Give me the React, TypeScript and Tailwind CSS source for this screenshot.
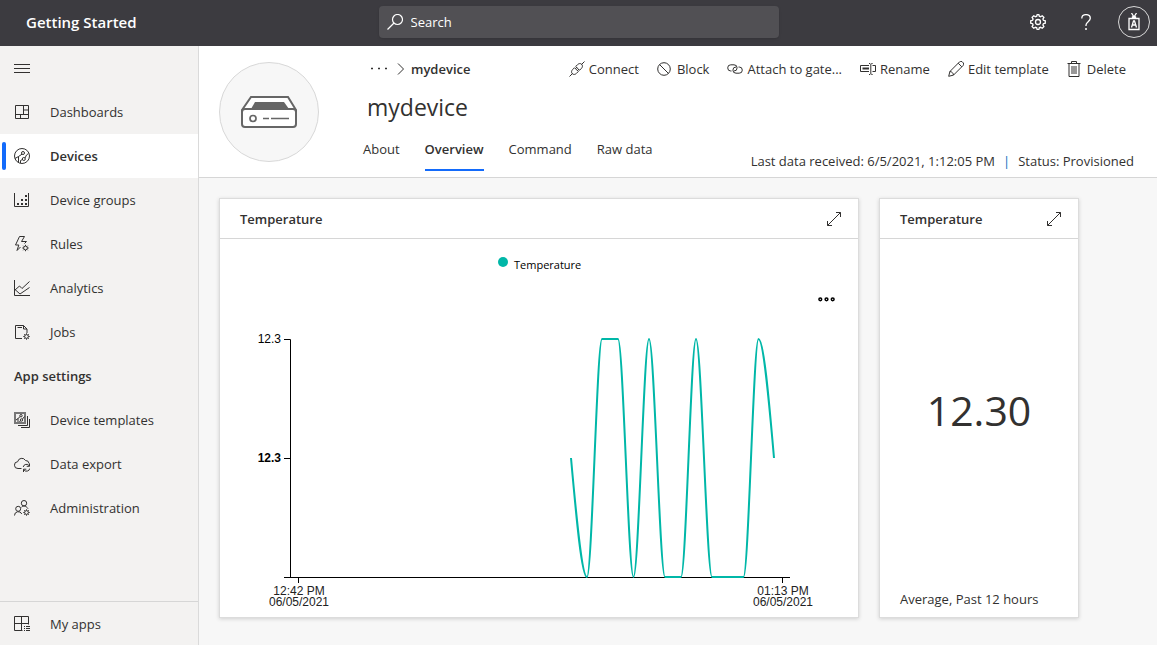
import type { ReactNode } from "react";

type IconProps = { children: ReactNode; className?: string; box?: string };

function Icon({ children, className = "size-4", box = "0 0 16 16" }: IconProps) {
  return (
    <svg
      viewBox={box}
      className={`shrink-0 ${className}`}
      fill="none"
      stroke="currentColor"
      strokeWidth="1"
      aria-hidden="true"
    >
      {children}
    </svg>
  );
}

const gearTeeth = (cx: number, cy: number, inner: number, outer: number) =>
  Array.from({ length: 8 }, (_, i) => {
    const a = (i * Math.PI) / 4;
    return `M${cx + inner * Math.cos(a)} ${cy + inner * Math.sin(a)}L${cx + outer * Math.cos(a)} ${cy + outer * Math.sin(a)}`;
  }).join("");

function SmallGear({ cx, cy }: { cx: number; cy: number }) {
  return (
    <>
      <circle cx={cx} cy={cy} r="1.9" />
      <path d={gearTeeth(cx, cy, 2, 3.2)} />
    </>
  );
}

const icons = {
  dashboards: (
    <Icon>
      <path d="M1.5 1.5h13v13h-13zM9.500 1.500v9M1.500 10.500h13M9.500 6h5M6.500 10.500v4" />
    </Icon>
  ),
  devices: (
    <Icon>
      <circle cx="8" cy="8" r="7.500" />
      <circle cx="9" cy="5" r="1.500" />
      <circle cx="9.800" cy="11" r="1.500" />
      <path d="M8 6.200L4.500 8.500v5.500M1 10.500l3.500-2M11 10l1.500-3 2-1.500M8.500 11.500l-2 1v2.500" />
    </Icon>
  ),
  groups: (
    <Icon>
      <path d="M.5 1v13.500h14V1" />
      <path strokeWidth="2" d="M3 12h2M7 12h2M11 12h2M7 8h2M11 8h2M11 4h2" />
    </Icon>
  ),
  rules: (
    <Icon>
      <path d="M6.500 11L3 14.500l1.800-5.500H1.500L5.500.5h5L7.500 5.500h5L10.500 7.500" />
      <SmallGear cx={11.5} cy={12} />
    </Icon>
  ),
  analytics: (
    <Icon>
      <path d="M.5 0v15.500H16M1 10l4.500-4 2.500 2.500L15.500 1.500M1 9.500l5 4.500 9.500-6.500" />
    </Icon>
  ),
  jobs: (
    <Icon>
      <path d="M8 14.500H1.500v-13h8l3.500 3.500v4M9.500 1.500V5H13M3.500 3.500h4.500" />
      <SmallGear cx={12.5} cy={12.5} />
    </Icon>
  ),
  templates: (
    <Icon>
      <path d="M1 1h10v10H1z" stroke="#777" strokeWidth="2" />
      <path d="M13.500 4v9.500H4M15.500 7v8.500H7" />
      <circle cx="7" cy="3.700" r="1.200" />
      <circle cx="7.500" cy="8" r="1.200" />
      <path d="M6 4.700L4 6.500V10M8.500 7l2-2.500M6.500 8.500L5.500 10M2 8l2-1.500" />
    </Icon>
  ),
  dataExport: (
    <Icon>
      <path d="M7.500 12.500H4a3.400 3.400 0 01-.3-6.800A4.200 4.200 0 0111.500 4.500a3.500 3.500 0 013.600 3" />
      <path d="M9.200 11a3.300 3.300 0 016-1.200M15.500 7.500v2.800h-2.800M15.800 12.500a3.300 3.300 0 01-6 1.200M9.500 16v-2.800h2.800" />
    </Icon>
  ),
  admin: (
    <Icon>
      <circle cx="10" cy="3.200" r="2.700" />
      <circle cx="4.200" cy="8.800" r="2.500" />
      <path d="M.5 15.500a3.800 3.800 0 017.300-1.500M7.500 7.200c1-1.300 4.500-2 6.500 1.500" />
      <SmallGear cx={12.5} cy={12.5} />
    </Icon>
  ),
  myApps: (
    <Icon>
      <path d="M8.500 14.500h-8V.5h14v8M.5 7.500h14M7.500.5v14M10 10.500h1M12 10.500h4M10 12.500h1M12 12.500h4M10 14.500h1M12 14.500h4" />
    </Icon>
  ),
  connect: (
    <Icon>
      <path d="M.5 15.500l3-3M12.500 3.500l3-3M3.300 12.700c-1.200-1.200-.8-3 .2-4l2-2 3.800 3.800-2 2c-1 1-2.800 1.400-4 .2zM6.700 5.500l3.800 3.800 2-2c1-1 1.400-2.800.2-4s-3-.8-4 .2zM6.500 7.700l1.700-1.700M8.500 9.700L10.200 8" />
    </Icon>
  ),
  block: (
    <Icon>
      <circle cx="7" cy="8" r="6.300" />
      <path d="M2.500 3.500l9 9" />
    </Icon>
  ),
  attach: (
    <Icon>
      <path d="M4.500 10H3.800a3.100 3.100 0 010-6.200H7A3.100 3.100 0 017 10M11.500 6h.7a3.100 3.100 0 010 6.200H9A3.100 3.100 0 019 6" />
    </Icon>
  ),
  rename: (
    <Icon>
      <path d="M9 4.500H.5v6H9M12.500 4.500h3v6h-3M9 2.500h1l.8.800.8-.8h1M9 13.500h1l.8-.8.8.8h1M10.800 3.300v9.400" />
      <path strokeWidth="2" d="M2.500 7.500H9" />
    </Icon>
  ),
  edit: (
    <Icon>
      <path d="M.7 15.300l1.200-4.800L11.500.9a1.900 1.900 0 012.800 0l.8.800a1.900 1.900 0 010 2.800L5.500 14.100zM1.900 10.500c1.800 0 3.600 1.800 3.600 3.600M10.200 2.200l3.600 3.600" />
    </Icon>
  ),
  trash: (
    <Icon>
      <path d="M.5 2.500h13M4.500 2.500V.5h5v2M2 2.500v13h10v-13M5 5v8M7 5v8M9 5v8" />
    </Icon>
  ),
  expand: (
    <Icon>
      <path d="M1.500 14.500l13-13M10 1.500h4.500V6M1.500 10v4.500H6" />
    </Icon>
  ),
};

const mainNav = [
  { label: "Dashboards", icon: icons.dashboards },
  { label: "Devices", icon: icons.devices, active: true },
  { label: "Device groups", icon: icons.groups },
  { label: "Rules", icon: icons.rules },
  { label: "Analytics", icon: icons.analytics },
  { label: "Jobs", icon: icons.jobs },
];

const settingsNav = [
  { label: "Device templates", icon: icons.templates },
  { label: "Data export", icon: icons.dataExport },
  { label: "Administration", icon: icons.admin },
];

const commands = [
  { label: "Connect", icon: icons.connect },
  { label: "Block", icon: icons.block },
  { label: "Attach to gate...", icon: icons.attach },
  { label: "Rename", icon: icons.rename },
  { label: "Edit template", icon: icons.edit },
  { label: "Delete", icon: icons.trash },
];

const tabs = ["About", "Overview", "Command", "Raw data"];

function NavItem({ label, icon, active }: { label: string; icon: ReactNode; active?: boolean }) {
  return (
    <a
      href="#"
      aria-current={active ? "page" : undefined}
      className={`relative flex h-11 items-center gap-5 px-3.5 ${active ? "bg-white" : ""}`}
    >
      {active && <span className="absolute left-0.5 top-2 h-7 w-1 rounded-sm bg-[#136bfb]" />}
      {icon}
      <span className={active ? "font-semibold" : ""}>{label}</span>
    </a>
  );
}

function Tile({ title, children }: { title: string; children: ReactNode }) {
  return (
    <section className="flex flex-col border border-[#dcdcdc] bg-white shadow-[0_1px_4px_rgba(0,0,0,0.16)]">
      <div className="flex h-10 items-center justify-between border-b border-[#d6d6d6] pl-5 pr-4">
        <h2 className="font-semibold">{title}</h2>
        <button type="button" aria-label="Expand tile">
          {icons.expand}
        </button>
      </div>
      {children}
    </section>
  );
}

const TOP = 100;
const MID = 219;
const BOTTOM = 338;

const readings: [number, number][] = [
  [351, MID],
  [367, BOTTOM],
  [382, TOP],
  [398, TOP],
  [413.5, BOTTOM],
  [429, TOP],
  [445, BOTTOM],
  [461, BOTTOM],
  [476, TOP],
  [492, BOTTOM],
  [523.5, BOTTOM],
  [538.5, TOP],
  [554, MID],
];

function monotonePath(points: [number, number][]) {
  return points.reduce((path, [x, y], i) => {
    if (i === 0) return `M${x} ${y}`;
    const [px, py] = points[i - 1];
    const third = (x - px) / 3;
    const startY = i === 1 ? py + (y - py) / 2 : py;
    const endY = i === points.length - 1 ? y - (y - py) / 2 : y;
    return `${path}C${px + third} ${startY} ${x - third} ${endY} ${x} ${y}`;
  }, "");
}

function TemperatureChart() {
  return (
    <svg
      viewBox="0 0 638 378"
      className="w-full font-['Liberation_Sans',sans-serif] text-[12px]"
      role="img"
      aria-label="Temperature over time"
    >
      <circle cx="283" cy="23" r="5" fill="#00b7a8" />
      <text x="294" y="30" className="font-['Open_Sans',sans-serif] text-[11px]">
        Temperature
      </text>
      <g fill="none" stroke="#000" strokeWidth="1.500">
        <circle cx="600.300" cy="60.300" r="1.400" />
        <circle cx="606.500" cy="60.300" r="1.400" />
        <circle cx="612.700" cy="60.300" r="1.400" />
      </g>
      <path
        d="M64 100.500h6.500v238M64 219.500h6.500M64 338.500h506M78.500 338v6M562.500 338v6"
        fill="none"
        stroke="#000"
      />
      <path d={monotonePath(readings)} fill="none" stroke="#00b7a8" strokeWidth="2" />
      <text x="61" y="104" textAnchor="end">12.3</text>
      <text x="61" y="223" textAnchor="end" className="font-bold">12.3</text>
      <g textAnchor="middle" fill="#222">
        <text x="79" y="356">12:42 PM</text>
        <text x="79" y="367">06/05/2021</text>
        <text x="563" y="356">01:13 PM</text>
        <text x="563" y="367">06/05/2021</text>
      </g>
    </svg>
  );
}

export default function App() {
  return (
    <div className="flex min-h-screen flex-col bg-[#f7f7f7] font-['Open_Sans',sans-serif] text-[13px] leading-5 text-[#323130]">
      <header className="grid h-[46px] grid-cols-[1fr_400px_1fr] items-center bg-[#3c3b40] pb-0.5 text-white">
        <h1 className="pl-[26px] text-[15px] font-semibold">Getting Started</h1>
        <label className="flex h-8 items-center gap-2 rounded-sm bg-[#515054] px-2 shadow-sm">
          <Icon>
            <circle cx="10.500" cy="5.500" r="5" strokeWidth="1.200" />
            <path d="M7 9L.5 15.500" strokeWidth="1.300" />
          </Icon>
          <input
            type="search"
            aria-label="Search"
            placeholder="Search"
            className="w-full bg-transparent outline-none placeholder:text-white"
          />
        </label>
        <div className="flex items-center justify-end pr-[7px]">
          <button type="button" aria-label="Settings" className="flex w-12 justify-center">
            <Icon>
              <path d="M15.300 9.200V6.800l-1.900-.5-.5-1.200 1-1.700-1.700-1.700-1.700 1-1.200-.5-.5-1.700H7.200l-.5 1.700-1.200.5-1.700-1-1.700 1.700 1 1.700-.5 1.200-1.900.5v2.400l1.900.5.5 1.200-1 1.700 1.700 1.700 1.700-1 1.200.5.5 1.900h1.600l.5-1.900 1.200-.5 1.700 1 1.700-1.700-1-1.700.5-1.200z" strokeWidth="1.300" />
              <circle cx="8" cy="8" r="2.500" strokeWidth="1.300" />
            </Icon>
          </button>
          <button type="button" aria-label="Help" className="flex w-12 justify-center">
            <Icon>
              <path d="M3.800 4.500C3.800 2 5.500.6 8 .6s4.300 1.400 4.300 3.700C12.300 7.500 8 7.800 8 11v1" strokeWidth="1.300" />
              <path d="M8 14v2" strokeWidth="1.500" />
            </Icon>
          </button>
          <button
            type="button"
            aria-label="Account"
            className="ml-2 flex size-8 items-center justify-center rounded-full border border-[#d8d8d8]"
          >
            <Icon className="size-[18px]" box="0 0 18 18">
              <path d="M4 5.500h10v11H4zM6.500 0L9 4l2.500-4M7.500 5V4h3v1" strokeWidth="1.300" />
              <path d="M6.500 14.500L8.500 8h1l2 6.500M7.200 12h3.600" strokeWidth="1.300" />
            </Icon>
          </button>
        </div>
      </header>

      <div className="flex flex-1">
        <nav aria-label="Main" className="flex w-[199px] shrink-0 flex-col border-r border-[#dadada] bg-[#f3f2f1]">
          <button type="button" aria-label="Toggle navigation" className="flex h-11 items-center px-3.5">
            <Icon>
              <path d="M0 4.500h16M0 8.500h16M0 12.500h16" />
            </Icon>
          </button>
          {mainNav.map((item) => (
            <NavItem key={item.label} {...item} />
          ))}
          <h2 className="flex h-11 items-center px-3.5 font-semibold">App settings</h2>
          {settingsNav.map((item) => (
            <NavItem key={item.label} {...item} />
          ))}
          <div className="mt-auto border-t border-[#d6d6d6]">
            <NavItem label="My apps" icon={icons.myApps} />
          </div>
        </nav>

        <main className="min-w-0 flex-1">
          <div className="flex h-[132px] gap-11 border-b border-[#d6d6d6] bg-white pl-5 pt-4">
            <div className="flex size-[100px] shrink-0 items-center justify-center rounded-full border border-[#d8d8d8] bg-[#f7f7f7]">
              <svg viewBox="0 0 56 32" className="h-8 w-14" aria-hidden="true">
                <path d="M10 1h37l8 13v14a3 3 0 01-3 3H4a3 3 0 01-3-3V14z" fill="#fff" stroke="#666" strokeWidth="2" />
                <path d="M14 6h29l5 7H10z" fill="#666" />
                <path d="M1 16a3 3 0 013-3h48a3 3 0 013 3" fill="none" stroke="#666" strokeWidth="2" />
                <circle cx="12" cy="22.500" r="3" fill="none" stroke="#666" strokeWidth="1.700" />
                <path d="M22 22.500h6M30 22.500h18" stroke="#666" strokeWidth="1.700" />
              </svg>
            </div>
            <div className="flex min-w-0 flex-1 flex-col">
              <div className="flex h-3.5 items-center justify-between pr-[31px]">
                <nav aria-label="Breadcrumb" className="flex items-center gap-2 pl-2">
                  <button type="button" aria-label="More levels">
                    <Icon>
                      <path d="M0 7.500h2M7 7.500h2M14 7.500h2" strokeWidth="1.500" />
                    </Icon>
                  </button>
                  <Icon>
                    <path d="M3 2.500l5.500 5.500L3 13.500" />
                  </Icon>
                  <a href="#" className="-ml-2 font-semibold">mydevice</a>
                </nav>
                <div role="toolbar" aria-label="Device commands" className="flex gap-[18px]">
                  {commands.map(({ label, icon }) => (
                    <button key={label} type="button" className="flex items-center gap-1 whitespace-nowrap">
                      {icon}
                      <span>{label}</span>
                    </button>
                  ))}
                </div>
              </div>
              <h2 className="mt-[13px] pl-1 text-[23px] leading-9">mydevice</h2>
              <div className="mt-3.5 flex justify-between pr-[23px]">
                <div role="tablist" className="flex items-start gap-[25px]">
                  {tabs.map((tab) => {
                    const selected = tab === "Overview";
                    return (
                      <button
                        key={tab}
                        type="button"
                        role="tab"
                        aria-selected={selected}
                        className={`border-b-2 pb-2.5 ${selected ? "border-[#136bfb] font-semibold" : "border-transparent"}`}
                      >
                        {tab}
                      </button>
                    );
                  })}
                </div>
                <p className="flex items-end gap-2 whitespace-nowrap">
                  <span>Last data received: 6/5/2021, 1:12:05 PM</span>
                  <span className="text-[#0f6cbd]">|</span>
                  <span>Status: Provisioned</span>
                </p>
              </div>
            </div>
          </div>

          <div className="grid grid-cols-[16fr_5fr] gap-5 pb-7 pl-5 pr-[78px] pt-5">
            <Tile title="Temperature">
              <TemperatureChart />
            </Tile>
            <Tile title="Temperature">
              <p className="flex flex-1 items-center justify-center pb-2 text-[41px]">12.30</p>
              <p className="px-5 pb-2">Average, Past 12 hours</p>
            </Tile>
          </div>
        </main>
      </div>
    </div>
  );
}
